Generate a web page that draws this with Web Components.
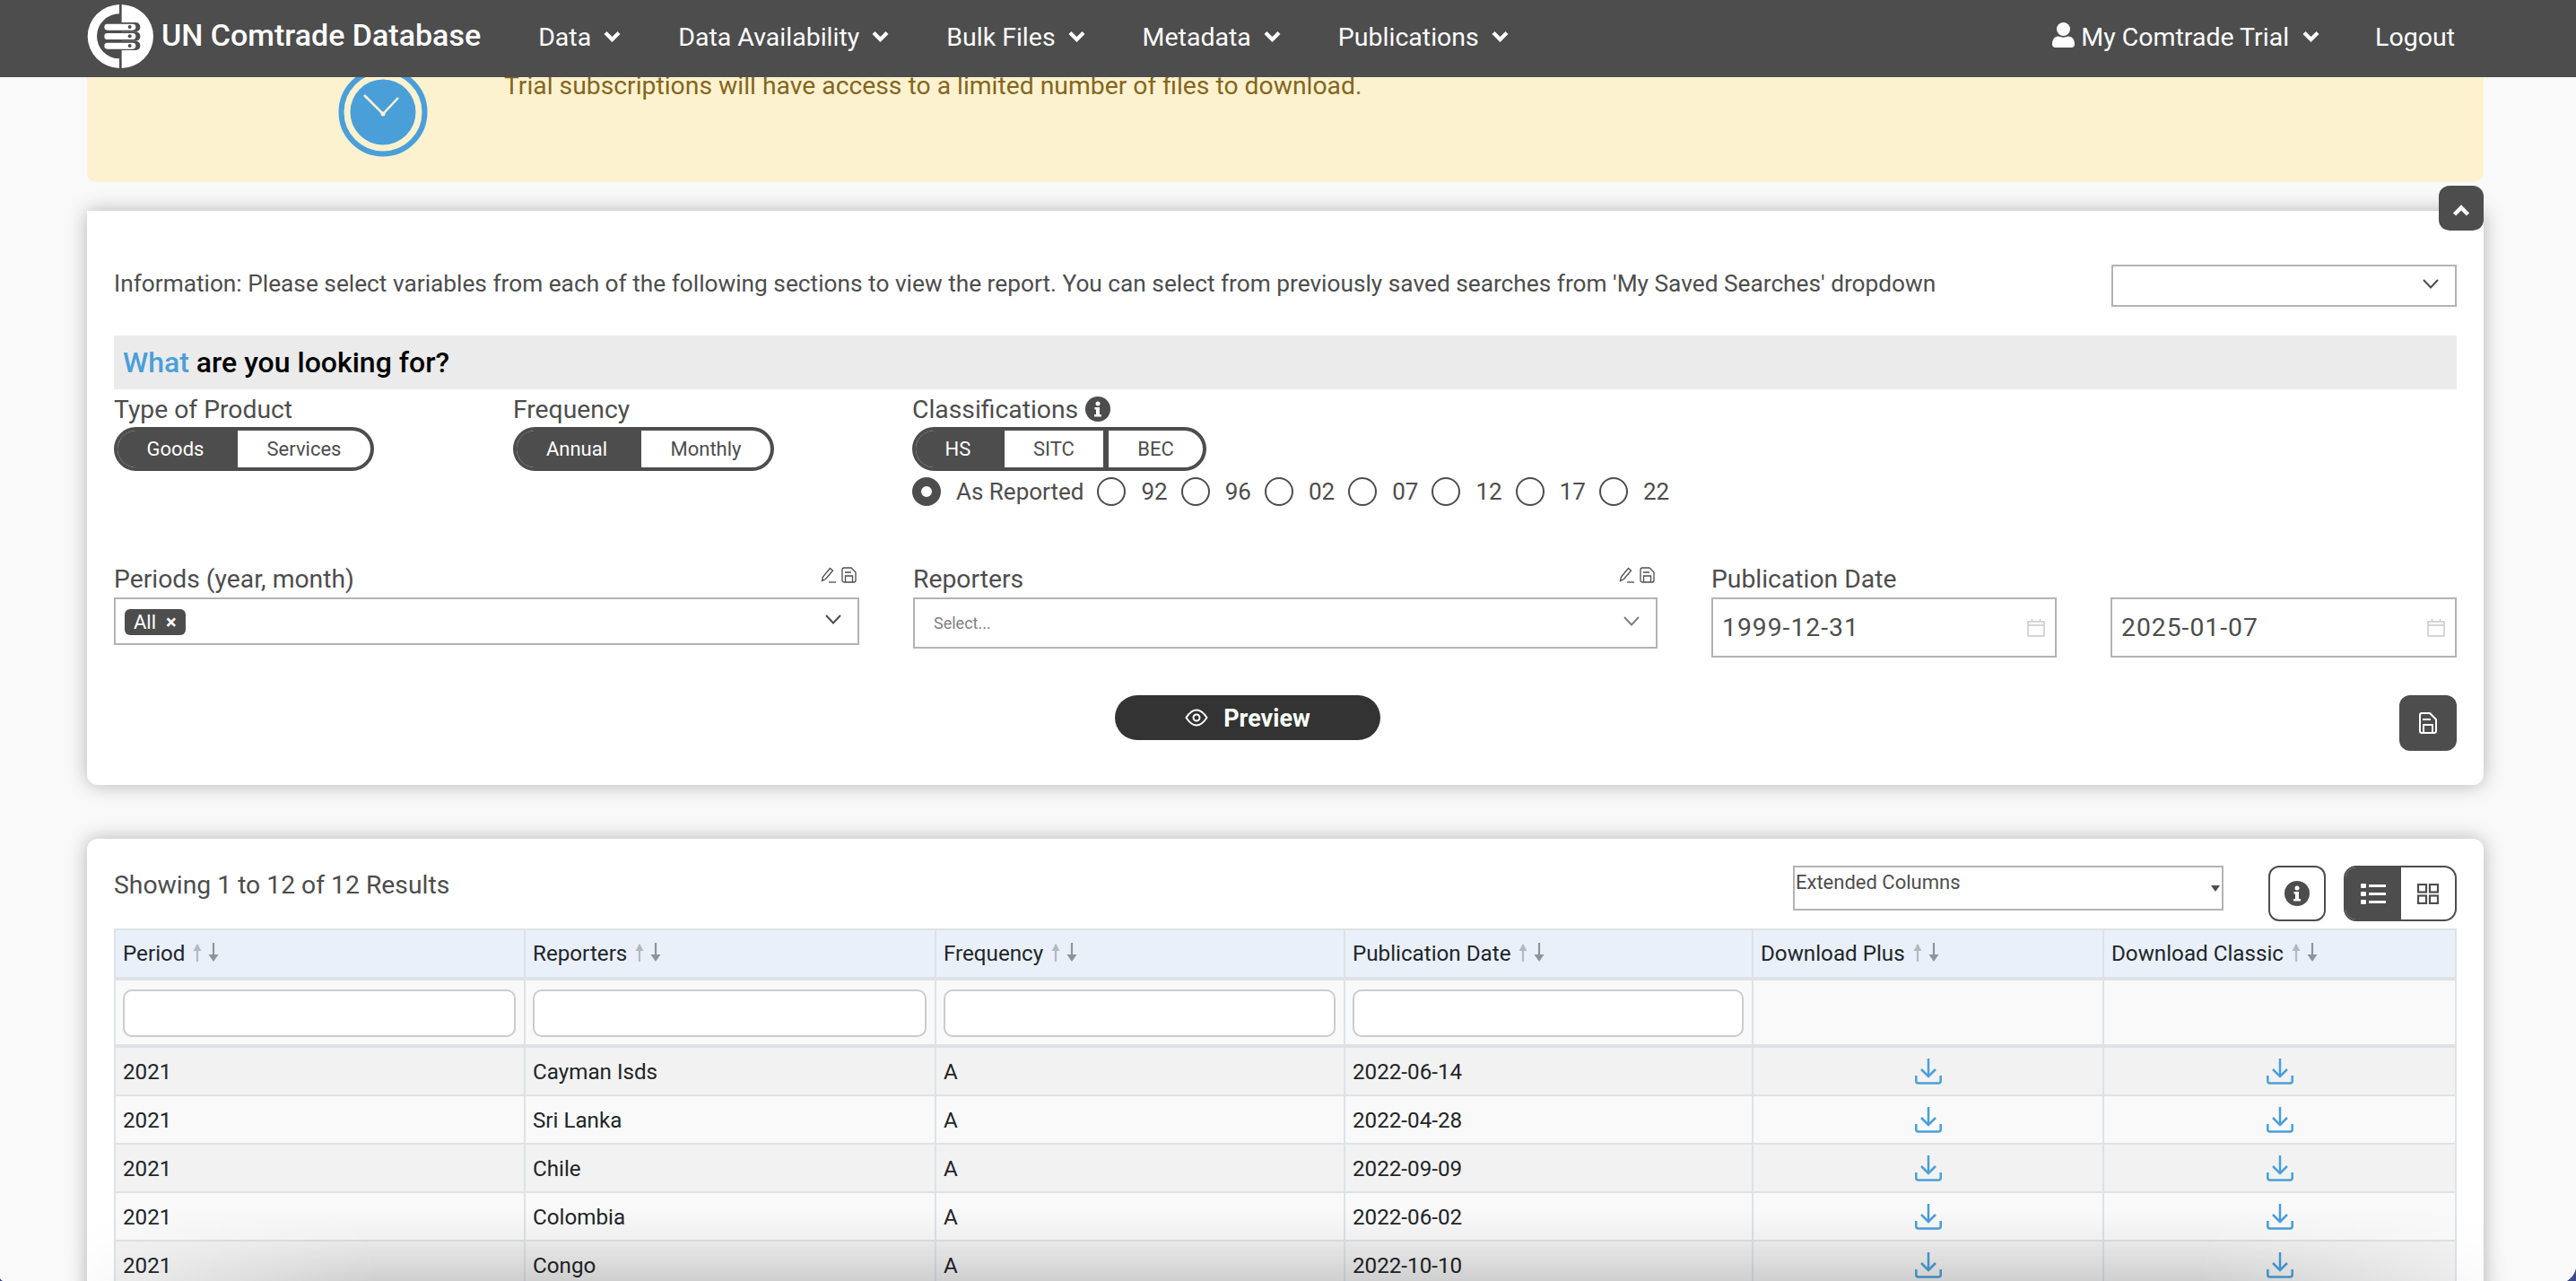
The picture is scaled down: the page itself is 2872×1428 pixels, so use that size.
<!DOCTYPE html>
<html lang="en">
<head>
<meta charset="utf-8">
<title>UN Comtrade Database</title>
<style>
  html, body { margin: 0; height: 1428px; overflow: hidden; }
  body { background: #f9f9f9; font-family: Roboto, "Liberation Sans", sans-serif; color: #4d4d4d; }
</style>
</head>
<body>
<app-header></app-header>
<trial-banner>Trial subscriptions will have access to a limited number of files to download.</trial-banner>
<search-panel></search-panel>
<results-panel></results-panel>
<window-edge></window-edge>

<script>
const ICONS = {
  chevron: '<svg width="19" height="13" viewBox="0 0 19 13"><path d="M2 2.500l7.500 7.500 7.500-7.500" fill="none" stroke="currentColor" stroke-width="4.200"/></svg>',
  thin: '<svg width="18" height="11" viewBox="0 0 18 11"><path d="M1 1l8 8.500 8-8.500" fill="none" stroke="currentColor" stroke-width="2"/></svg>',
  up: '<svg width="20" height="14" viewBox="0 0 20 14"><path d="M2.500 11l7.500-7.500 7.500 7.500" fill="none" stroke="currentColor" stroke-width="4.500"/></svg>',
  user: '<svg width="25" height="28" viewBox="0 0 25 28"><circle cx="12.500" cy="7.500" r="7.500" fill="currentColor"/><path d="M0 24.500c0-6 3-9 7-9 3.500 1.500 7.500 1.500 11 0 4 0 7 3 7 9 0 2-1.500 3.500-3.500 3.500h-18c-2 0-3.500-1.500-3.500-3.500z" fill="currentColor"/></svg>',
  save: '<svg width="24" height="24" viewBox="0 0 24 24" fill="none" stroke="currentColor" stroke-width="2" stroke-linejoin="round"><path d="M19 23H5a2 2 0 0 1-2-2V3a2 2 0 0 1 2-2h9l7 7v13a2 2 0 0 1-2 2z"/><path d="M6 8h9M7 23v-9h10v9"/></svg>',
  saveSm: '<svg width="17" height="18" viewBox="0 0 17 18" fill="none" stroke="currentColor" stroke-width="1.300"><path d="M14 17H3a2 2 0 0 1-2-2V3a2 2 0 0 1 2-2h8l5 5v9a2 2 0 0 1-2 2z"/><path d="M4 6h7M4.500 17v-7h8v7"/></svg>',
  pencil: '<svg width="19" height="18" viewBox="0 0 19 18" fill="none" stroke="currentColor" stroke-width="1.300"><path d="M1.500 15.500l1-4.500 8-9.500 3 2.500-8 9.500z"/><path d="M9 17h8"/></svg>',
  info: '<svg width="28" height="28" viewBox="0 0 28 28"><circle cx="14" cy="14" r="14" fill="currentColor"/><circle cx="14" cy="8" r="2.500" fill="#fff"/><path d="M10.500 12h5.500v8h2v2.500h-8V20h2v-5.500h-1.500z" fill="#fff"/></svg>',
  eye: '<svg width="26" height="20" viewBox="0 0 26 20" fill="none" stroke="currentColor" stroke-width="2"><path d="M1.500 10C6 3 10 1.500 13 1.500S20 3 24.500 10C20 17 16 18.500 13 18.500S6 17 1.500 10z"/><circle cx="13" cy="10" r="3.500"/></svg>',
  calendar: '<svg width="20" height="20" viewBox="0 0 20 20" fill="none" stroke="#c9c9c9" stroke-width="1.500"><rect x="1" y="3" width="18" height="16"/><path d="M1 7h18M5.500 0v3M14.500 0v3"/></svg>',
  list: '<svg width="28" height="23" viewBox="0 0 28 23" fill="currentColor"><rect width="6" height="5" y="0" rx="1"/><rect width="6" height="5" y="9" rx="1"/><rect width="6" height="5" y="18" rx="1"/><rect x="9" y="1" width="19" height="3"/><rect x="9" y="10" width="19" height="3"/><rect x="9" y="19" width="19" height="3"/></svg>',
  grid: '<svg width="24" height="23" viewBox="0 0 24 23" fill="none" stroke="currentColor" stroke-width="2.200"><rect x="1" y="1" width="9" height="8.500"/><rect x="14" y="1" width="9" height="8.500"/><rect x="1" y="13.500" width="9" height="8.500"/><rect x="14" y="13.500" width="9" height="8.500"/></svg>',
  sort: '<svg width="34" height="22" viewBox="0 0 34 22" fill="none" stroke-width="2.200"><path d="M7 21V2" stroke="#b4b9c0"/><path d="M2.500 9l4.500-8 4.500 8z" fill="#b4b9c0" stroke="none"/><path d="M25 0v19" stroke="#8f949b"/><path d="M19.500 13l5.500 8 5.500-8z" fill="#8f949b" stroke="none"/></svg>',
  download: '<svg width="30" height="29" viewBox="0 0 30 29" fill="none" stroke="#4a9fd9"><path d="M15 0v19" stroke-width="2.500"/><path d="M7 12l8 8 8-8" stroke-width="2.500"/><path d="M1.300 19v6q0 2.500 2.500 2.500h22.400q2.500 0 2.500-2.500v-6" stroke-width="2.500"/></svg>'
};

class AppHeader extends HTMLElement {
  constructor() {
    super();
    this.attachShadow({ mode: 'open' });
    this.shadowRoot.innerHTML = `
      <style>
        :host { display: flex; position: relative; z-index: 5; height: 86px; background: #4d4d4d; color: #fff;
                align-items: center; padding: 0 135px 0 97px; box-sizing: border-box; font-size: 28.500px; }
        .logo { display: block; width: 75px; height: 74px; margin: -5px 8px 0 0; }
        .brand { font-size: 34px; font-weight: 500; margin-right: 64px; margin-top: -9px; white-space: nowrap; }
        nav { display: flex; gap: 64px; align-items: center; }
        .item { display: flex; align-items: center; gap: 14px; white-space: nowrap; margin-top: -4px; }
        .item svg { display: block; margin-top: -2px; }
        .right { margin-left: auto; display: flex; align-items: center; margin-top: -4px; }
        .user { display: flex; align-items: center; gap: 7px; white-space: nowrap; }
        .user svg:first-child { margin-top: -4px; }
        .user svg:last-child { margin-left: 8px; margin-top: -2px; }
        .logout { margin-left: 62px; }
      </style>
      <svg class="logo" viewBox="110 12 225 222" aria-hidden="true">
        <path d="M218 15A110 106.500 0 0 0 112 121.500A110 106.500 0 0 0 218 228V196A75 75 0 0 1 218 46Z" fill="#fff"/>
        <path d="M226 15A110 106.500 0 0 1 332 121.500A110 106.500 0 0 1 226 228Z" fill="#fff"/>
        <g fill="#4d4d4d">
          <rect x="210" y="75" width="78" height="31" rx="15"/>
          <rect x="210" y="106" width="78" height="31" rx="15"/>
          <rect x="210" y="137" width="78" height="31" rx="15"/>
        </g>
        <g fill="#fff">
          <rect x="168" y="80" width="105" height="21" rx="10"/>
          <rect x="168" y="111" width="105" height="21" rx="10"/>
          <rect x="168" y="143" width="105" height="21" rx="10"/>
        </g>
        <g fill="#4d4d4d">
          <circle cx="253" cy="90" r="6"/><circle cx="253" cy="121" r="6"/><circle cx="253" cy="153" r="6"/>
        </g>
      </svg>
      <div class="brand">UN Comtrade Database</div>
      <nav>
        ${['Data', 'Data Availability', 'Bulk Files', 'Metadata', 'Publications']
          .map(t => `<div class="item">${t}${ICONS.chevron}</div>`).join('')}
      </nav>
      <div class="right">
        <div class="user">${ICONS.user}My Comtrade Trial${ICONS.chevron}</div>
        <div class="logout">Logout</div>
      </div>`;
  }
}

class TrialBanner extends HTMLElement {
  constructor() {
    super();
    this.attachShadow({ mode: 'open' });
    this.shadowRoot.innerHTML = `
      <style>
        :host { display: flex; height: 117px; margin: 0 103px 0 97px; box-sizing: border-box; background: #fdf2d0;
                border-radius: 0 0 10px 10px; color: #84661e; font-size: 28.300px; }
        svg { display: block; width: 100px; height: 100px; margin: -11px 0 0 280px; flex: none; }
        .msg { margin: -7px 0 0 85px; line-height: 34px; }
      </style>
      <svg viewBox="0 0 100 100" aria-hidden="true">
        <circle cx="50" cy="50" r="46.500" fill="none" stroke="#4a9fd9" stroke-width="6"/>
        <circle cx="50" cy="50" r="36.500" fill="#4a9fd9"/>
        <path d="M29 31l21 21 17-18" fill="none" stroke="#fdf2d0" stroke-width="2.500"/>
        <circle cx="50" cy="52" r="2.500" fill="#fdf2d0"/>
      </svg>
      <div class="msg"><slot></slot></div>`;
  }
}

class SegToggle extends HTMLElement {
  connectedCallback() {
    const root = this.attachShadow({ mode: 'open' });
    const opts = this.getAttribute('options').split(',');
    const widths = this.getAttribute('widths').split(',');
    root.innerHTML = `
      <style>
        :host { display: inline-flex; height: 49px; box-sizing: border-box; border: 4px solid #4d4d4d; border-radius: 25px;
                overflow: hidden; font-size: 22px; background: #fff; }
        div { display: flex; align-items: center; justify-content: center; color: #4d4d4d; }
        div + div { border-left: 6px solid #4d4d4d; }
        .on { background: #4d4d4d; color: #fff; padding-right: 5px; box-sizing: border-box; }
        .on + div { border-left: 0; }
      </style>
      ${opts.map((o, i) => `<div class="${i === 0 ? 'on' : ''}" style="width:${widths[i]}px">${o}</div>`).join('')}`;
  }
}

class RadioItem extends HTMLElement {
  connectedCallback() {
    const root = this.attachShadow({ mode: 'open' });
    const on = this.hasAttribute('checked');
    root.innerHTML = `
      <style>
        :host { display: inline-flex; align-items: center; gap: 17px; font-size: 26px; }
        i { display: block; width: 32px; height: 32px; box-sizing: border-box; border-radius: 50%;
            border: ${on ? '10px solid #4d4d4d' : '2px solid #4d4d4d'}; background: #fff; }
      </style>
      <i></i><span><slot></slot></span>`;
  }
}

class ComboBox extends HTMLElement {
  connectedCallback() {
    const root = this.attachShadow({ mode: 'open' });
    root.innerHTML = `
      <style>
        :host { display: flex; align-items: center; justify-content: space-between; box-sizing: border-box;
                border: 2px solid #b3b3b3; background: #fff; padding: 0 18px 0 10px; color: #4d4d4d; }
        svg { display: block; margin-top: -4px; flex: none; }
      </style>
      <div><slot></slot></div>${ICONS.thin}`;
  }
}

class DateBox extends HTMLElement {
  connectedCallback() {
    const root = this.attachShadow({ mode: 'open' });
    root.innerHTML = `
      <style>
        :host { display: flex; align-items: center; justify-content: space-between; box-sizing: border-box; height: 67px; margin-top: 0;
                border: 2px solid #b3b3b3; background: #fff; padding: 0 11px 0 10px; font-size: 28.300px; letter-spacing: 1px; color: #4d4d4d; }
        svg { display: block; }
      </style>
      <div><slot></slot></div>${ICONS.calendar}`;
  }
}

class FieldLabel extends HTMLElement {
  connectedCallback() {
    const root = this.attachShadow({ mode: 'open' });
    const tools = this.hasAttribute('tools');
    root.innerHTML = `
      <style>
        :host { display: flex; justify-content: space-between; align-items: flex-start; height: 37px; font-size: 28.300px; line-height: 34px; color: #4d4d4d; }
        .tools { display: flex; gap: 4px; color: #4d4d4d; margin: 3px 3px 0 0; }
        svg { display: block; }
      </style>
      <div><slot></slot></div>
      ${tools ? `<div class="tools">${ICONS.pencil}${ICONS.saveSm}</div>` : ''}`;
  }
}

class SearchPanel extends HTMLElement {
  constructor() {
    super();
    this.attachShadow({ mode: 'open' });
    this.shadowRoot.innerHTML = `
      <style>
        :host { display: block; position: relative; height: 640px; margin: 32px 103px 0 97px; box-sizing: border-box;
                padding: 60px 30px 0; background: #fff; border-radius: 0 0 12px 12px;
                box-shadow: 0 0 22px rgba(0,0,0,.28); font-size: 26.250px; color: #4d4d4d; }
        .collapse { position: absolute; top: -28px; right: 0; width: 50px; height: 50px; box-sizing: border-box; border-radius: 12px; background: #4d4d4d;
                    color: #fff; display: flex; align-items: center; justify-content: center; padding-top: 6px; }
        .info { display: flex; justify-content: space-between; align-items: center; height: 47px; }
        .info combo-box { width: 385px; height: 47px; }
        .info span { margin-top: -6px; }
        h2 { margin: 32px 0 0; height: 60px; background: #ebebeb; font-size: 32px; font-weight: 500; line-height: 60px; padding-left: 10px; color: #000; }
        h2 b { font-weight: 500; color: #4a9fd9; }
        .types { display: flex; padding-top: 6px; height: 130px; box-sizing: border-box; }
        .types > div { width: 445px; flex: none; }
        .types field-label { height: 36px; }
        .info-i { display: inline-flex; color: #4d4d4d; margin-left: 8px; vertical-align: -4px; }
        .info-i svg { display: block; }
        .radios { display: flex; gap: 15px; margin-top: 7px; height: 32px; font-size: 26px; }
        .fields { display: grid; grid-template-columns: 831px 830px 385px 386px; column-gap: 60px; margin-top: 65px; align-items: start; }
        .fields .periods { height: 53px; }
        .fields .reporters { height: 57px; font-size: 18px; color: #808080; padding-left: 21px; }
        .tag { display: inline-flex; align-items: center; height: 29px; padding: 0 10px; gap: 11px; background: #4d4d4d; color: #fff; border-radius: 6px; font-size: 22px; }
        .tag span { font-weight: 700; font-size: 22px; }
        .actions { position: absolute; left: 30px; right: 30px; top: 540px; display: flex; align-items: flex-start; }
        .preview { display: flex; align-items: center; justify-content: center; gap: 17px; margin-left: 1116px; width: 296px; height: 50px; border-radius: 25px;
                   background: #333; color: #fff; font-size: 27px; font-weight: 700; }
        .preview span { margin-top: 1px; }
        .save { margin-left: auto; width: 64px; height: 62px; border-radius: 12px; background: #4d4d4d; color: #fff; display: flex; align-items: center; justify-content: center; }
      </style>
      <div class="collapse">${ICONS.up}</div>
      <div class="info">
        <span>Information: Please select variables from each of the following sections to view the report. You can select from previously saved searches from 'My Saved Searches' dropdown</span>
        <combo-box></combo-box>
      </div>
      <h2><b>What</b> are you looking for?</h2>
      <div class="types">
        <div><field-label>Type of Product</field-label><seg-toggle options="Goods,Services" widths="134,148"></seg-toggle></div>
        <div><field-label>Frequency</field-label><seg-toggle options="Annual,Monthly" widths="139,144"></seg-toggle></div>
        <div style="width:auto">
          <field-label><span>Classifications<span class="info-i">${ICONS.info}</span></span></field-label>
          <seg-toggle options="HS,SITC,BEC" widths="99,110,105"></seg-toggle>
          <div class="radios">
            <radio-item checked>As Reported</radio-item>
            <radio-item>92</radio-item><radio-item>96</radio-item><radio-item>02</radio-item>
            <radio-item>07</radio-item><radio-item>12</radio-item><radio-item>17</radio-item><radio-item>22</radio-item>
          </div>
        </div>
      </div>
      <div class="fields">
        <div><field-label tools>Periods (year, month)</field-label>
          <combo-box class="periods"><span class="tag">All<span>×</span></span></combo-box></div>
        <div><field-label tools>Reporters</field-label>
          <combo-box class="reporters">Select...</combo-box></div>
        <div><field-label>Publication Date</field-label><date-box>1999-12-31</date-box></div>
        <div><field-label>&nbsp;</field-label><date-box>2025-01-07</date-box></div>
      </div>
      <div class="actions">
        <div class="preview">${ICONS.eye}<span>Preview</span></div>
        <div class="save">${ICONS.save}</div>
      </div>`;
  }
}

class ResultsPanel extends HTMLElement {
  constructor() {
    super();
    this.attachShadow({ mode: 'open' });
    const heads = ['Period', 'Reporters', 'Frequency', 'Publication Date', 'Download Plus', 'Download Classic'];
    const rows = [
      ['Cayman Isds', '2022-06-14'], ['Sri Lanka', '2022-04-28'], ['Chile', '2022-09-09'],
      ['Colombia', '2022-06-02'], ['Congo', '2022-10-10']
    ];
    this.shadowRoot.innerHTML = `
      <style>
        :host { display: block; height: 640px; margin: 60px 103px 0 97px; box-sizing: border-box; padding: 30px 30px 0;
                background: #fff; border-radius: 12px; box-shadow: 0 0 22px rgba(0,0,0,.28); color: #4d4d4d; }
        .bar { display: flex; align-items: flex-start; height: 70px; font-size: 28.300px; }
        .count { margin: 5px auto 0 0; line-height: 34px; }
        .cols { position: relative; width: 480px; height: 50px; box-sizing: border-box; border: 2px solid #b3b3b3; font-size: 22px; padding: 0 0 0 1px; line-height: 34px; }
        .cols::after { content: ''; position: absolute; right: 2px; top: 20px; border: 5px solid transparent; border-top: 7px solid #4d4d4d; }
        .help { margin-left: 50px; width: 64px; height: 62px; box-sizing: border-box; border: 2px solid #4d4d4d; border-radius: 12px; display: flex; align-items: center; justify-content: center; }
        .view { margin-left: 20px; width: 126px; height: 62px; box-sizing: border-box; border: 2px solid #4d4d4d; border-radius: 14px; display: flex; overflow: hidden; }
        .view div { flex: 1; display: flex; align-items: center; justify-content: center; }
        .view .on { background: #4d4d4d; color: #fff; flex: none; width: 62px; }
        svg { display: block; }
        table { border-collapse: separate; border-spacing: 0; table-layout: fixed; width: 2612px; font-size: 24.200px; color: #212529;
                border-left: 2px solid #dee2e6; border-top: 2px solid #dee2e6; }
        th, td { box-sizing: border-box; padding: 0 8px; border-right: 2px solid #dee2e6; border-bottom: 2px solid #dee2e6; font-weight: 400; text-align: left; }
        th { height: 56px; background: #e9f0fa; border-bottom-width: 4px; }
        th div { display: flex; align-items: center; gap: 7px; }
        th svg { margin-top: -2px; }
        tr.filter td { height: 75px; background: #f2f2f2; border-bottom-width: 4px; padding-right: 9px; }
        input { display: block; width: 100%; height: 53px; box-sizing: border-box; border: 2px solid #ccc; border-radius: 10px; background: #fff; padding: 0; outline: none; }
        td { height: 54px; padding-top: 1px; }
        tbody tr:nth-child(even) td { background: #f2f2f2; }
        tbody tr:nth-child(odd) td { background: #f9f9f9; }
        td.dl svg { margin: 0 auto; }
      </style>
      <div class="bar">
        <div class="count">Showing 1 to 12 of 12 Results</div>
        <div class="cols">Extended Columns</div>
        <div class="help">${ICONS.info}</div>
        <div class="view"><div class="on">${ICONS.list}</div><div>${ICONS.grid}</div></div>
      </div>
      <table>
        <colgroup><col style="width:457px"><col style="width:458px"><col style="width:456px"><col style="width:455px"><col style="width:391px"><col style="width:393px"></colgroup>
        <thead><tr>${heads.map(h => `<th><div>${h}${ICONS.sort}</div></th>`).join('')}</tr></thead>
        <tbody>
          <tr class="filter">${[0, 1, 2, 3].map(() => '<td><input type="text"></td>').join('')}<td></td><td></td></tr>
          ${rows.map(r => `<tr><td>2021</td><td>${r[0]}</td><td>A</td><td>${r[1]}</td><td class="dl">${ICONS.download}</td><td class="dl">${ICONS.download}</td></tr>`).join('')}
        </tbody>
      </table>`;
  }
}

class WindowEdge extends HTMLElement {
  constructor() {
    super();
    this.attachShadow({ mode: 'open' });
    this.shadowRoot.innerHTML = `
      <style>
        :host { display: block; position: fixed; left: 0; right: 0; bottom: 0; height: 80px; z-index: 9; pointer-events: none; }
        .fade { position: absolute; inset: 0; background: linear-gradient(to bottom, rgba(0,0,0,0) 0, rgba(0,0,0,.04) 45%, rgba(0,0,0,.14) 100%);
                -webkit-mask-image: linear-gradient(to right, transparent 70px, #000 420px, #000 calc(100% - 420px), transparent calc(100% - 70px)); }
        svg { position: absolute; bottom: 0; }
      </style>
      <div class="fade"></div>
      <svg style="right:0" width="10" height="14" viewBox="0 0 10 14"><path d="M10 0Q8 9 0 14H10Z" fill="#3c4a8c"/></svg>
      <svg style="left:0" width="3" height="3" viewBox="0 0 3 3"><path d="M0 0Q1 2 3 3H0Z" fill="#3c4a8c"/></svg>`;
  }
}

customElements.define('app-header', AppHeader);
customElements.define('trial-banner', TrialBanner);
customElements.define('seg-toggle', SegToggle);
customElements.define('radio-item', RadioItem);
customElements.define('combo-box', ComboBox);
customElements.define('date-box', DateBox);
customElements.define('field-label', FieldLabel);
customElements.define('search-panel', SearchPanel);
customElements.define('results-panel', ResultsPanel);
customElements.define('window-edge', WindowEdge);
</script>
</body>
</html>
